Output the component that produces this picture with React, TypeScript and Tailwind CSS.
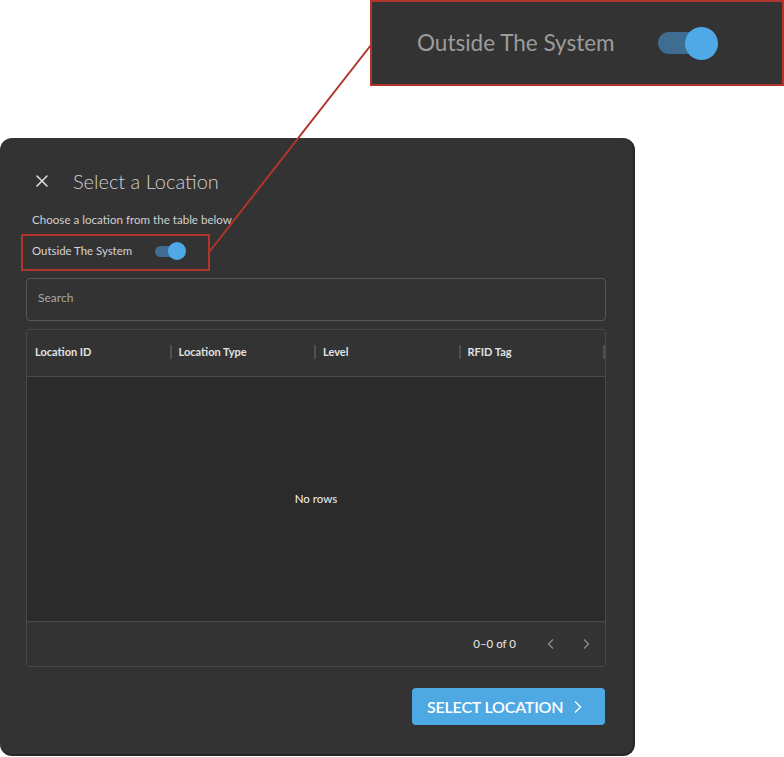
import React from "react";

function Toggle({ big }: { big?: boolean }) {
  if (big) {
    return (
      <div className="relative w-[60px] h-[33px] flex items-center">
        <div className="w-[44px] h-[22px] rounded-full bg-[#3f6d91]" />
        <div className="absolute left-[27px] top-0 w-[33px] h-[33px] rounded-full bg-[#4ea9e6]" />
      </div>
    );
  }
  return (
    <div className="relative w-[31px] h-[18px] flex items-center">
      <div className="w-[26px] h-[11px] rounded-full bg-[#3f6d91]" />
      <div className="absolute left-[13px] top-0 w-[18px] h-[18px] rounded-full bg-[#4ea9e6]" />
    </div>
  );
}

function Sep() {
  return <div className="w-[2px] h-[14px] bg-[#4f4f4f]" />;
}

export default function App() {
  const cols = ["Location ID", "Location Type", "Level", "RFID Tag"];
  return (
    <div
      className="relative w-[784px] h-[757px] bg-white overflow-hidden"
      style={{ fontFamily: "Lato, 'Noto Sans', sans-serif" }}
    >
      <div className="pt-[138px]">
        <div className="w-[635px] h-[618px] rounded-[12px] bg-[#333333] border-r-2 border-b-2 border-[#262626] flex flex-col pl-[26px] pr-[27px]">
          <div className="mt-[31px] h-[24px] flex items-center pl-[8px]">
            <svg width="16" height="16" viewBox="0 0 16 16" className="text-[#e0e0e0]">
              <path d="M3 3 L13 13 M13 3 L3 13" stroke="currentColor" strokeWidth="1.5" strokeLinecap="round" />
            </svg>
            <span className="ml-[23px] text-[20px] font-light text-[#d0d0d0]">Select a Location</span>
          </div>
          <div className="mt-[19px] h-[16px] flex items-center pl-[6px] text-[11.6px] text-[#cfcfcf]">
            Choose a location from the table below
          </div>
          <div className="mt-[13px] h-[20px] flex items-center pl-[6px]">
            <span className="text-[11.4px] text-[#d4d4d4] w-[123px]">Outside The System</span>
            <Toggle />
          </div>
          <div className="mt-[17px] h-[43px] rounded-[4px] border border-[#575757] flex items-center pl-[11px] pb-[4px] text-[12px] text-[#a8a8a8]">
            Search
          </div>
          <div className="mt-[8px] h-[338px] rounded-[4px] border border-[#4a4a4a] flex flex-col overflow-hidden">
            <div className="h-[47px] flex items-center pb-[2px] border-b border-[#4a4a4a] bg-[#333333]">
              {cols.map((c, i) => (
                <div key={c} className="w-[145px] flex items-center justify-between">
                  <span className={"text-[11px] font-bold text-[#e2e2e2] " + (i === 0 ? "pl-[8px]" : "pl-[7px]")}>{c}</span>
                  <Sep />
                </div>
              ))}
            </div>
            <div className="flex-1 bg-[#2b2b2b] flex items-center justify-center text-[11.5px] font-medium text-[#e6e6e6]">
              No rows
            </div>
            <div className="h-[45px] border-t border-[#4a4a4a] bg-[#333333] flex items-center justify-end pr-[14px]">
              <span className="text-[11.5px] font-medium text-[#e0e0e0]">0–0 of 0</span>
              <svg width="10" height="12" viewBox="0 0 10 12" className="ml-[30px] text-[#8a8a8a]">
                <path d="M7 1.5 L2.5 6 L7 10.5" stroke="currentColor" strokeWidth="1.4" fill="none" />
              </svg>
              <svg width="10" height="12" viewBox="0 0 10 12" className="ml-[25px] text-[#8a8a8a]">
                <path d="M3 1.5 L7.5 6 L3 10.5" stroke="currentColor" strokeWidth="1.4" fill="none" />
              </svg>
            </div>
          </div>
          <div className="mt-[21px] mr-[1px] self-end w-[193px] h-[37px] rounded-[4px] bg-[#4ea9e3] flex items-center pl-[15px]">
            <span className="text-[16px] font-semibold text-white tracking-[-0.2px]">SELECT LOCATION</span>
            <svg width="12" height="16" viewBox="0 0 12 16" className="ml-[9px] text-white">
              <path d="M3 2.5 L8.5 8 L3 13.5" stroke="currentColor" strokeWidth="1.3" fill="none" />
            </svg>
          </div>
        </div>
      </div>

      {/* annotation: callout box */}
      <div className="absolute left-[370px] top-0 w-[414px] h-[86px] border-2 border-[#b0352b] bg-[#333333] flex items-center pl-[45px]">
        <span className="text-[22.5px] text-[#9c9c9c] w-[241px]">Outside The System</span>
        <Toggle big />
      </div>

      {/* annotation: highlight box */}
      <div className="absolute left-[21px] top-[234px] w-[189px] h-[37px] border-2 border-[#b0352b]" />

      {/* annotation: connector line */}
      <svg className="absolute left-0 top-0 pointer-events-none" width="784" height="757">
        <line x1="210" y1="251" x2="371" y2="45" stroke="#b0352b" strokeWidth="2" />
      </svg>
    </div>
  );
}
